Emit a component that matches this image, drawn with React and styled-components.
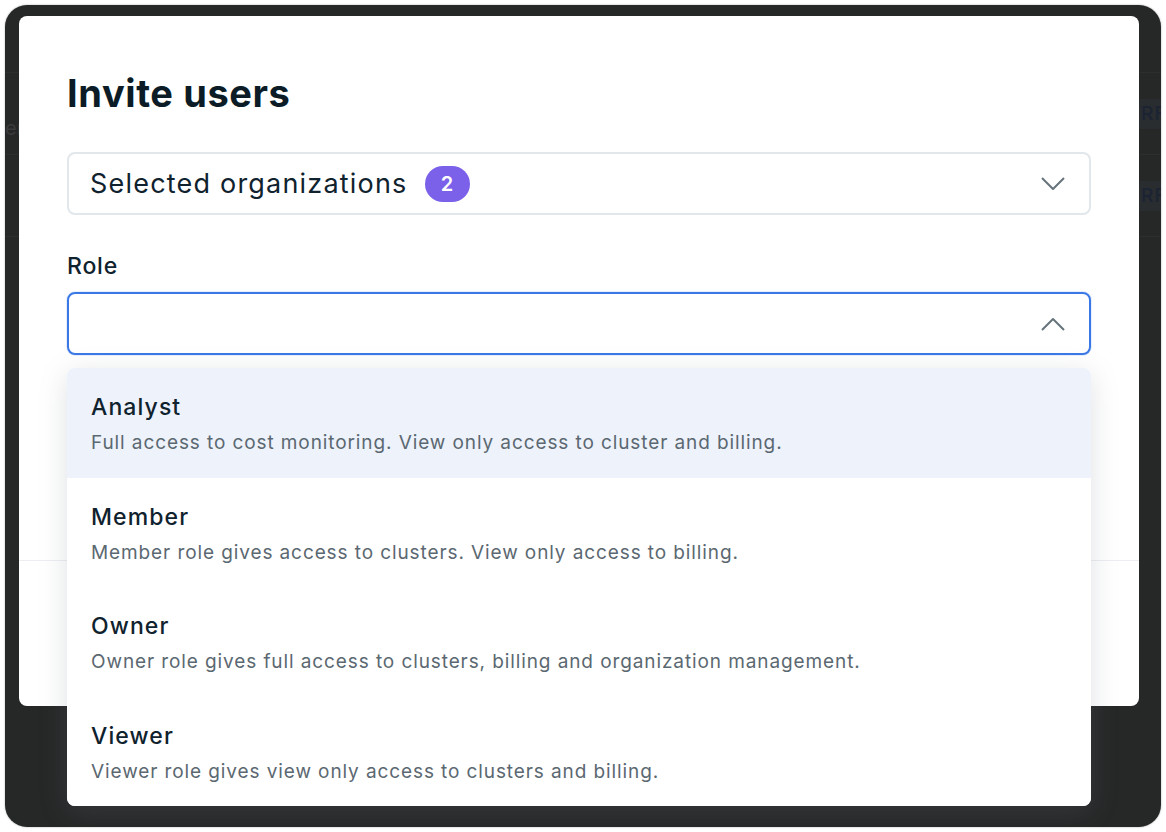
import React from 'react';
import styled, { createGlobalStyle } from 'styled-components';

const GlobalStyle = createGlobalStyle`
  * { box-sizing: border-box; }
  html, body {
    margin: 0;
    padding: 0;
    background: #ffffff;
  }
  body {
    font-family: Inter, "Noto Sans", sans-serif;
    -webkit-font-smoothing: antialiased;
  }
`;

const Page = styled.div`
  padding: 5px;
`;

const Frame = styled.div`
  position: relative;
  width: 1156px;
  height: 822px;
  border-radius: 22px;
  background: #262727;
  overflow: hidden;
  box-shadow: 0 0 2px rgba(0, 0, 0, 0.35);
`;

const BackTable = styled.div`
  display: flex;
  flex-direction: column;
`;

const BackHeader = styled.div`
  height: 68px;
  border-bottom: 1px solid #2c2d2e;
`;

const BackRow = styled.div`
  height: 82px;
  display: flex;
  align-items: center;
  justify-content: space-between;
  border-bottom: 1px solid #2c2d2e;
`;

const BackName = styled.div`
  align-self: stretch;
  padding-top: 43px;
  font-size: 20px;
  line-height: 24px;
  color: #3a3b3b;
`;

const BackBadge = styled.div`
  width: 44px;
  height: 30px;
  margin-right: -22px;
  display: flex;
  align-items: center;
  padding-left: 2px;
  background: #2a2d30;
  color: #1c2433;
  font-size: 19px;
  font-weight: 600;
  letter-spacing: 1px;
`;

const Modal = styled.div`
  position: absolute;
  top: 11px;
  left: 14px;
  width: 1120px;
  height: 690px;
  background: #ffffff;
  border-radius: 8px;
  display: flex;
  flex-direction: column;
  padding: 54px 48px 0;
`;

const Title = styled.h1`
  margin: 0 0 36px;
  font-size: 38px;
  line-height: 46px;
  font-weight: 700;
  color: #0b1c26;
  letter-spacing: 0.6px;
`;

const SelectBox = styled.div`
  height: 63px;
  display: flex;
  align-items: center;
  gap: 17px;
  padding: 0 24px 0 21px;
  border: 2px solid ${p => (p.$focused ? '#3b78e7' : '#e2e7eb')};
  border-radius: 8px;
  background: #fff;
  box-shadow: ${p => (p.$focused ? '0 0 0 1px rgba(59, 120, 231, 0.12)' : 'none')};
`;

const SelectText = styled.span`
  font-size: 27px;
  font-weight: 400;
  color: #0f222d;
  letter-spacing: 1.2px;
`;

const CountBadge = styled.span`
  min-width: 45px;
  height: 36px;
  border-radius: 18px;
  background: #7b61e9;
  color: #ffffff;
  font-size: 20px;
  font-weight: 600;
  display: inline-flex;
  align-items: center;
  justify-content: center;
`;

const ChevronWrap = styled.span`
  margin-left: auto;
  display: flex;
  align-items: center;
`;

const FieldLabel = styled.div`
  margin: 37px 0 12px;
  font-size: 23px;
  line-height: 28px;
  font-weight: 500;
  color: #0f222d;
  letter-spacing: 0.8px;
`;

const Field = styled.div`
  position: relative;
`;

const Menu = styled.div`
  position: absolute;
  top: calc(100% + 13px);
  left: 0;
  right: 0;
  z-index: 10;
  background: #ffffff;
  border-radius: 8px;
  overflow: hidden;
  box-shadow: 0 6px 28px rgba(110, 120, 130, 0.22);
`;

const MenuItem = styled.div`
  height: 109.5px;
  padding: 25px 24px 0;
  background: ${p => (p.$active ? '#edf2fb' : '#ffffff')};
`;

const ItemTitle = styled.div`
  font-size: 23px;
  line-height: 28px;
  font-weight: 500;
  color: #0f222d;
  letter-spacing: 1.1px;
`;

const ItemDesc = styled.div`
  margin-top: 10px;
  font-size: 19px;
  line-height: 24px;
  color: #5b6871;
  letter-spacing: 0.9px;
`;

const Footer = styled.div`
  margin: auto -48px 0;
  height: 146px;
  padding: 0 48px;
  border-top: 1px solid #eceef2;
  display: flex;
  align-items: center;
  justify-content: flex-end;
  gap: 12px;
`;

const Button = styled.button`
  height: 48px;
  padding: 0 24px;
  border-radius: 8px;
  font: 500 18px Inter, sans-serif;
  border: 1px solid ${p => (p.$primary ? '#3b78e7' : '#d5dbe0')};
  background: ${p => (p.$primary ? '#3b78e7' : '#ffffff')};
  color: ${p => (p.$primary ? '#ffffff' : '#0f222d')};
`;

const Chevron = ({ up }) => (
  <svg width="24" height="14" viewBox="0 0 24 14" fill="none">
    <polyline
      points={up ? '1,13 12,2 23,13' : '1,1 12,12 23,1'}
      stroke="#66747b"
      strokeWidth="2"
      strokeLinejoin="round"
    />
  </svg>
);

const roles = [
  { name: 'Analyst', desc: 'Full access to cost monitoring. View only access to cluster and billing.' },
  { name: 'Member', desc: 'Member role gives access to clusters. View only access to billing.' },
  { name: 'Owner', desc: 'Owner role gives full access to clusters, billing and organization management.' },
  { name: 'Viewer', desc: 'Viewer role gives view only access to clusters and billing.' },
];

export default function App() {
  return (
    <Page>
      <GlobalStyle />
      <Frame>
        <BackTable>
          <BackHeader />
          <BackRow>
            <BackName>er</BackName>
            <BackBadge>RF</BackBadge>
          </BackRow>
          <BackRow>
            <BackName />
            <BackBadge>RF</BackBadge>
          </BackRow>
        </BackTable>

        <Modal>
          <Title>Invite users</Title>
          <SelectBox>
            <SelectText>Selected organizations</SelectText>
            <CountBadge>2</CountBadge>
            <ChevronWrap>
              <Chevron />
            </ChevronWrap>
          </SelectBox>

          <FieldLabel>Role</FieldLabel>
          <Field>
            <SelectBox $focused>
              <ChevronWrap>
                <Chevron up />
              </ChevronWrap>
            </SelectBox>
            <Menu>
              {roles.map((r, i) => (
                <MenuItem key={r.name} $active={i === 0}>
                  <ItemTitle>{r.name}</ItemTitle>
                  <ItemDesc>{r.desc}</ItemDesc>
                </MenuItem>
              ))}
            </Menu>
          </Field>

          <Footer>
            <Button>Cancel</Button>
            <Button $primary>Invite</Button>
          </Footer>
        </Modal>
      </Frame>
    </Page>
  );
}
